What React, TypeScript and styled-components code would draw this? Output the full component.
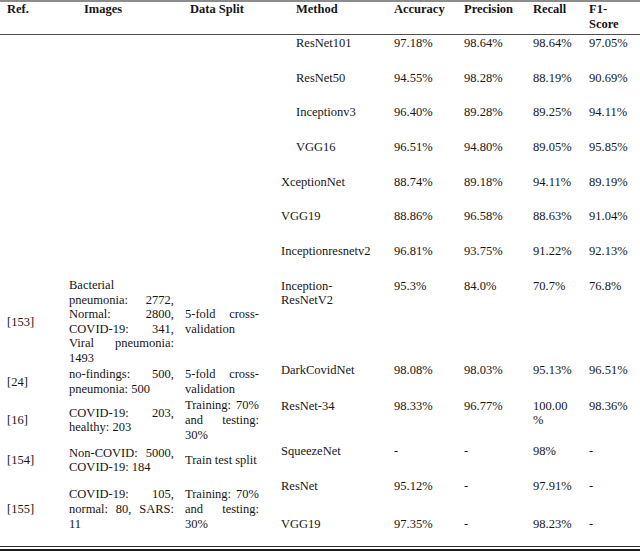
import React from 'react';
import styled, { createGlobalStyle } from 'styled-components';

const GlobalStyle = createGlobalStyle`
  body {
    margin: 0;
    background: #ffffff;
  }
`;

// column paddings (left / right), indexed by grid column - 1
const PAD_L = [7, 7, 5, 7, 7, 7, 7, 7];
const PAD_R = [4, 6, 15, 8, 4, 4, 8, 11];

const Frame = styled.div`
  width: 640px;
  padding-bottom: 2px;
  border-bottom: 2px solid #1c1c1c;
  font-family: "Liberation Serif", "DejaVu Serif", serif;
  font-size: 12.5px;
  line-height: 14.6px;
  color: #161616;
`;

const Table = styled.div`
  display: grid;
  grid-template-columns: 62px 118px 94px 113px 70px 69px 56px 58px;
  grid-template-rows: 33px repeat(7, 34.7px) 84px 4px 32px 45px 35px 38px 25px;
  border-top: 2px solid #8c8c8c;
  border-bottom: 1px solid #2a2a2a;
  padding-bottom: 5px;
`;

const HeadCell = styled.div<{ $col: number; $indent?: number }>`
  grid-row: 1;
  grid-column: ${p => p.$col};
  padding: 0 ${p => PAD_R[p.$col - 1]}px 0 ${p => p.$indent ?? PAD_L[p.$col - 1]}px;
  font-weight: bold;
  border-bottom: 1px solid #4e4e4e;
`;

const Cell = styled.div<{ $row: string; $col: number; $indent?: boolean }>`
  grid-row: ${p => p.$row};
  grid-column: ${p => p.$col};
  padding: 1px ${p => PAD_R[p.$col - 1]}px 0 ${p => (p.$indent ? 22 : PAD_L[p.$col - 1])}px;
  overflow-wrap: anywhere;
`;

const GroupCell = styled.div<{ $row: string; $col: number; $justify?: boolean }>`
  grid-row: ${p => p.$row};
  grid-column: ${p => p.$col};
  display: flex;
  flex-direction: column;
  justify-content: center;
  padding: 0 ${p => PAD_R[p.$col - 1]}px 0 ${p => PAD_L[p.$col - 1]}px;
  text-align: ${p => (p.$justify ? 'justify' : 'left')};
`;

const headers = [
  { title: 'Ref.', indent: 7 },
  { title: 'Images', indent: 22 },
  { title: 'Data Split', indent: 10 },
  { title: 'Method', indent: 22 },
  { title: 'Accuracy' },
  { title: 'Precision' },
  { title: 'Recall' },
  { title: 'F1-Score' },
];

const studies = [
  {
    row: '9 / 11',
    ref: '[153]',
    images: 'Bacterial pneumonia: 2772, Normal: 2800, COVID-19: 341, Viral pneumonia: 1493',
    split: '5-fold cross-validation',
  },
  { row: '11', ref: '[24]', images: 'no-findings: 500, pneumonia: 500', split: '5-fold cross-validation' },
  { row: '12', ref: '[16]', images: 'COVID-19: 203, healthy: 203', split: 'Training: 70% and testing: 30%' },
  { row: '13', ref: '[154]', images: 'Non-COVID: 5000, COVID-19: 184', split: 'Train test split' },
  {
    row: '14 / 16',
    ref: '[155]',
    images: 'COVID-19: 105, normal: 80, SARS: 11',
    split: 'Training: 70% and testing: 30%',
  },
];

const methods = [
  { row: '2', name: 'ResNet101', indent: true, vals: ['97.18%', '98.64%', '98.64%', '97.05%'] },
  { row: '3', name: 'ResNet50', indent: true, vals: ['94.55%', '98.28%', '88.19%', '90.69%'] },
  { row: '4', name: 'Inceptionv3', indent: true, vals: ['96.40%', '89.28%', '89.25%', '94.11%'] },
  { row: '5', name: 'VGG16', indent: true, vals: ['96.51%', '94.80%', '89.05%', '95.85%'] },
  { row: '6', name: 'XceptionNet', vals: ['88.74%', '89.18%', '94.11%', '89.19%'] },
  { row: '7', name: 'VGG19', vals: ['88.86%', '96.58%', '88.63%', '91.04%'] },
  { row: '8', name: 'Inceptionresnetv2', vals: ['96.81%', '93.75%', '91.22%', '92.13%'] },
  { row: '9', name: 'Inception-ResNetV2', vals: ['95.3%', '84.0%', '70.7%', '76.8%'] },
  { row: '10 / 12', name: 'DarkCovidNet', vals: ['98.08%', '98.03%', '95.13%', '96.51%'] },
  { row: '12', name: 'ResNet-34', vals: ['98.33%', '96.77%', '100.00%', '98.36%'] },
  { row: '13', name: 'SqueezeNet', vals: ['-', '-', '98%', '-'] },
  { row: '14', name: 'ResNet', vals: ['95.12%', '-', '97.91%', '-'] },
  { row: '15', name: 'VGG19', vals: ['97.35%', '-', '98.23%', '-'] },
];

const App: React.FC = () => {
  return (
    <>
      <GlobalStyle />
      <Frame>
        <Table>
          {headers.map((h, i) => (
            <HeadCell key={h.title} $col={i + 1} $indent={h.indent}>
              {h.title}
            </HeadCell>
          ))}
          {studies.map(s => (
            <React.Fragment key={s.ref}>
              <GroupCell $row={s.row} $col={1}>
                {s.ref}
              </GroupCell>
              <GroupCell $row={s.row} $col={2} $justify>
                {s.images}
              </GroupCell>
              <GroupCell $row={s.row} $col={3} $justify>
                {s.split}
              </GroupCell>
            </React.Fragment>
          ))}
          {methods.map(m => (
            <React.Fragment key={m.row + m.name}>
              <Cell $row={m.row} $col={4} $indent={m.indent}>
                {m.name}
              </Cell>
              {m.vals.map((v, i) => (
                <Cell key={i} $row={m.row} $col={5 + i}>
                  {v}
                </Cell>
              ))}
            </React.Fragment>
          ))}
        </Table>
      </Frame>
    </>
  );
};

export default App;
